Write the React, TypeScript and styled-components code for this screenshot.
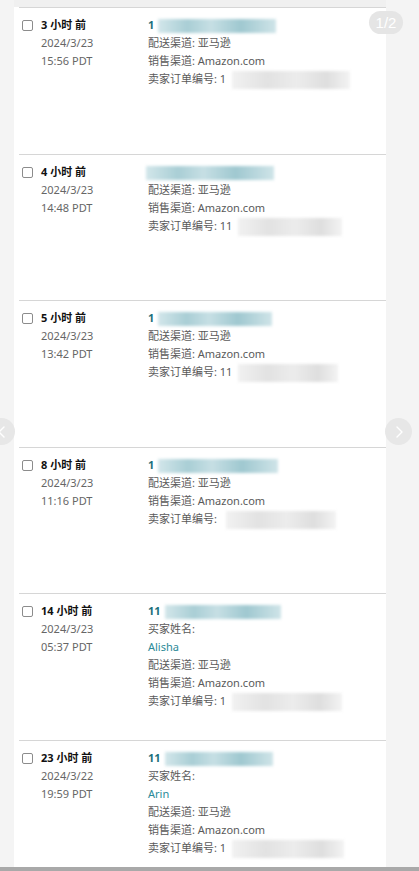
import React from "react";
import styled, { createGlobalStyle } from "styled-components";

const GlobalStyle = createGlobalStyle`
    html, body {
        margin: 0;
        padding: 0;
        background: #f4f4f4;
    }
    body {
        font-family: "Noto Sans", "Noto Sans CJK SC", sans-serif;
        font-size: 11px;
        color: #555;
    }
`;

const PageStyled = styled.div`
    position: relative;
    width: 419px;
    height: 871px;
    overflow: hidden;
    display: flex;
    flex-direction: column;
`;

const ViewportStyled = styled.div`
    flex: 1;
    overflow: hidden;
    padding-left: 14px;
`;

const PanelStyled = styled.div`
    width: 372px;
    background: #fff;
    display: flex;
    flex-direction: column;
`;

const TopStripStyled = styled.div`
    height: 7px;
    background: #f0f0f0;
`;

const RowStyled = styled.div`
    margin-left: 5px;
    height: 146.6px;
    box-sizing: border-box;
    border-top: 1.5px solid #d6d6d6;
    display: grid;
    grid-template-columns: 12px 100px 1fr;
    column-gap: 7px;
    padding: 8px 0 0 3px;
    line-height: 18px;
`;

const CheckboxStyled = styled.span`
    margin-top: 4px;
    width: 11px;
    height: 11px;
    box-sizing: border-box;
    border: 1px solid #8c8c8c;
    border-radius: 2px;
    background: #fff;
`;

const WhenStyled = styled.div`
    display: flex;
    flex-direction: column;
    color: #666;
`;

const AgoStyled = styled.span`
    font-weight: 700;
    color: #111;
`;

const DetailStyled = styled.div`
    display: flex;
    flex-direction: column;
    color: #5a5a5a;
    white-space: nowrap;
`;

const OrderNoStyled = styled.span`
    font-weight: 700;
    color: #1b6f7c;
`;

const BuyerStyled = styled.span`
    color: #2b8a98;
`;

const RedactStyled = styled.span<{ $w: number; $tone: "teal" | "gray"; $ml?: number; $h?: number }>`
    display: inline-block;
    vertical-align: middle;
    width: ${(p) => p.$w}px;
    height: ${(p) => p.$h ?? 14}px;
    margin-left: ${(p) => p.$ml ?? 2}px;
    filter: blur(1.6px);
    background: ${(p) =>
        p.$tone === "teal"
            ? "linear-gradient(90deg, #d2e6ea 0%, #a9ced5 25%, #c6dfe4 45%, #9fc8d0 70%, #cfe4e8 100%)"
            : "linear-gradient(90deg, #f1f1f1 0%, #e2e2e2 30%, #ececec 55%, #dedede 80%, #f3f3f3 100%)"};
`;

const BadgeStyled = styled.div`
    position: absolute;
    left: 369px;
    top: 11px;
    width: 34px;
    height: 23px;
    border-radius: 12px;
    background: #e5e5e5;
    color: #fff;
    font-size: 15px;
    line-height: 23px;
    text-align: center;
    font-family: "Liberation Sans", sans-serif;
`;

const NavStyled = styled.div<{ $side: "left" | "right" }>`
    position: absolute;
    top: 418px;
    ${(p) => (p.$side === "left" ? "left: -12px;" : "left: 385px;")}
    width: 27px;
    height: 27px;
    border-radius: 50%;
    background: #e7e7e7;
    display: flex;
    align-items: center;
    justify-content: center;
`;

const BottomBarStyled = styled.div`
    height: 4px;
    background: #a9a9a9;
`;

type TOrder = {
    ago: string;
    date: string;
    time: string;
    orderPrefix: string;
    orderBlur: number;
    buyer?: string;
    sellerPrefix: string;
    sellerBlur: number;
};

const orders: TOrder[] = [
    { ago: "3 小时 前", date: "2024/3/23", time: "15:56 PDT", orderPrefix: "1", orderBlur: 118, sellerPrefix: "1", sellerBlur: 118 },
    { ago: "4 小时 前", date: "2024/3/23", time: "14:48 PDT", orderPrefix: "", orderBlur: 128, sellerPrefix: "11", sellerBlur: 104 },
    { ago: "5 小时 前", date: "2024/3/23", time: "13:42 PDT", orderPrefix: "1", orderBlur: 114, sellerPrefix: "11", sellerBlur: 100 },
    { ago: "8 小时 前", date: "2024/3/23", time: "11:16 PDT", orderPrefix: "1", orderBlur: 120, sellerPrefix: "", sellerBlur: 110 },
    { ago: "14 小时 前", date: "2024/3/23", time: "05:37 PDT", orderPrefix: "11", orderBlur: 116, buyer: "Alisha", sellerPrefix: "1", sellerBlur: 110 },
    { ago: "23 小时 前", date: "2024/3/22", time: "19:59 PDT", orderPrefix: "11", orderBlur: 108, buyer: "Arin", sellerPrefix: "1", sellerBlur: 112 },
];

function Chevron({ dir }: { dir: "left" | "right" }) {
    return (
        <svg width="10" height="14" viewBox="0 0 10 14" fill="none">
            <path
                d={dir === "right" ? "M3 2 L8 7 L3 12" : "M7 2 L2 7 L7 12"}
                stroke="#fff"
                strokeWidth="1.4"
                strokeLinecap="round"
                strokeLinejoin="round"
            />
        </svg>
    );
}

function OrderRow({ order }: { order: TOrder }) {
    return (
        <RowStyled>
            <CheckboxStyled />
            <WhenStyled>
                <AgoStyled>{order.ago}</AgoStyled>
                <span>{order.date}</span>
                <span>{order.time}</span>
            </WhenStyled>
            <DetailStyled>
                <span>
                    <OrderNoStyled>{order.orderPrefix}</OrderNoStyled>
                    <RedactStyled $w={order.orderBlur} $tone="teal" $ml={order.orderPrefix ? 4 : -2} />
                </span>
                {order.buyer && (
                    <>
                        <span>买家姓名:</span>
                        <BuyerStyled>{order.buyer}</BuyerStyled>
                    </>
                )}
                <span>配送渠道: 亚马逊</span>
                <span>销售渠道: Amazon.com</span>
                <span>
                    卖家订单编号: {order.sellerPrefix}
                    <RedactStyled $w={order.sellerBlur} $tone="gray" $h={18} $ml={6} />
                </span>
            </DetailStyled>
        </RowStyled>
    );
}

export default function App() {
    return (
        <>
            <GlobalStyle />
            <PageStyled>
                <ViewportStyled>
                    <PanelStyled>
                        <TopStripStyled />
                        {orders.map((order, index) => (
                            <OrderRow key={index} order={order} />
                        ))}
                    </PanelStyled>
                </ViewportStyled>
                <BottomBarStyled />

                {/* carousel controls */}
                <BadgeStyled>1/2</BadgeStyled>
                <NavStyled $side="left">
                    <Chevron dir="left" />
                </NavStyled>
                <NavStyled $side="right">
                    <Chevron dir="right" />
                </NavStyled>
            </PageStyled>
        </>
    );
}
